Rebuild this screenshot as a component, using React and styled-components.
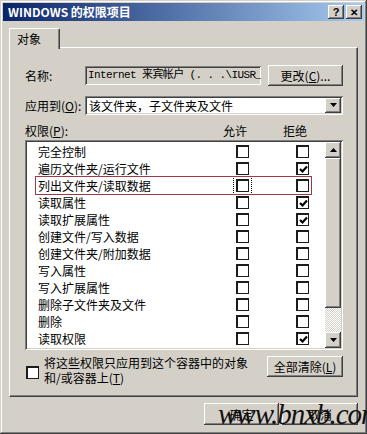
import React from 'react';
import styled, { createGlobalStyle } from 'styled-components';

const GlobalStyle = createGlobalStyle`
  html, body {
    margin: 0;
    padding: 0;
    background: #d4d0c8;
  }
  * {
    box-sizing: border-box;
  }
  body {
    font-family: "Noto Sans CJK SC", "Liberation Sans", sans-serif;
    font-size: 12px;
    color: #000;
  }
`;

const raised = `
  box-shadow: inset -1px -1px #404040, inset 1px 1px #ffffff,
    inset -2px -2px #808080, inset 2px 2px #d4d0c8;
`;
const sunken = `
  box-shadow: inset 1px 1px #808080, inset -1px -1px #ffffff,
    inset 2px 2px #404040, inset -2px -2px #d4d0c8;
`;

const perms = [
  { name: '完全控制', allow: false, deny: false },
  { name: '遍历文件夹/运行文件', allow: false, deny: true },
  { name: '列出文件夹/读取数据', allow: false, deny: false, marked: true },
  { name: '读取属性', allow: false, deny: true },
  { name: '读取扩展属性', allow: false, deny: true },
  { name: '创建文件/写入数据', allow: false, deny: false },
  { name: '创建文件夹/附加数据', allow: false, deny: false },
  { name: '写入属性', allow: false, deny: false },
  { name: '写入扩展属性', allow: false, deny: false },
  { name: '删除子文件夹及文件', allow: false, deny: false },
  { name: '删除', allow: false, deny: false },
  { name: '读取权限', allow: false, deny: true },
];

const CheckMark = () => (
  <svg width="9" height="9" viewBox="0 0 9 9">
    <polyline points="1,4 3.5,6.5 8,1.5" fill="none" stroke="#000" strokeWidth="2.2" />
  </svg>
);

const Arrow = ({ up }) => (
  <svg width="7" height="4" viewBox="0 0 7 4">
    <polygon points={up ? '3.5,0 7,4 0,4' : '0,0 7,0 3.5,4'} fill="#000" />
  </svg>
);

const Check = ({ checked, focused }) => (
  <CheckBox $focused={focused}>{checked && <CheckMark />}</CheckBox>
);

const App = () => {
  return (
    <>
      <GlobalStyle />
      <Window>
        <TitleBar>
          <TitleText>WINDOWS 的权限项目</TitleText>
          <TitleButton>?</TitleButton>
          <TitleButton $close>✕</TitleButton>
        </TitleBar>

        <TabStrip>
          <Tab>对象</Tab>
        </TabStrip>

        <Panel>
          <FieldRow>
            <Label>名称:</Label>
            <NameField>Internet 来宾帐户 (.  .  .\IUSR_</NameField>
            <Button $w={75}>
              更改(<u>C</u>)...
            </Button>
          </FieldRow>

          <ApplyRow>
            <Label>
              应用到(<u>O</u>):
            </Label>
            <Select>
              <SelectText>该文件夹，子文件夹及文件</SelectText>
              <SelectButton>
                <Arrow />
              </SelectButton>
            </Select>
          </ApplyRow>

          <HeaderRow>
            <HeaderLabel>
              权限(<u>P</u>):
            </HeaderLabel>
            <HeaderCol>允许</HeaderCol>
            <HeaderCol>拒绝</HeaderCol>
          </HeaderRow>

          <ListBox>
            <Rows>
              {perms.map((p, i) => (
                <PermRow key={p.name} $marked={p.marked}>
                  <PermName>{p.name}</PermName>
                  <Check checked={p.allow} focused={i === 2} />
                  <Check checked={p.deny} />
                </PermRow>
              ))}
            </Rows>
            <ScrollBar>
              <ScrollButton>
                <Arrow up />
              </ScrollButton>
              <Thumb />
              <Track />
              <ScrollButton>
                <Arrow />
              </ScrollButton>
            </ScrollBar>
          </ListBox>

          <BottomRow>
            <InheritBox>
              <Check />
              <InheritText>
                将这些权限只应用到这个容器中的对象
                <br />
                和/或容器上(<u>T</u>)
              </InheritText>
            </InheritBox>
            <Button $w={76}>
              全部清除(<u>L</u>)
            </Button>
          </BottomRow>
        </Panel>

        <Footer>
          <Button $w={75} $h={22}>确定</Button>
          <Button $w={76} $h={22}>取消</Button>
        </Footer>

        <Watermark>www.bnxb.com</Watermark>
      </Window>
    </>
  );
};

const Window = styled.div`
  position: relative;
  width: 367px;
  height: 434px;
  padding: 3px;
  background: #d4d0c8;
  box-shadow: inset -1px -1px #404040, inset 1px 1px #d4d0c8,
    inset -2px -2px #808080, inset 2px 2px #ffffff;
  overflow: hidden;
`;

const TitleBar = styled.div`
  display: flex;
  align-items: center;
  height: 18px;
  padding: 0 2px 0 5px;
  background: linear-gradient(to right, #0a246a, #a6caf0);
  color: #fff;
`;

const TitleText = styled.div`
  flex: 1;
  font-weight: 700;
  font-size: 12px;
  line-height: 18px;
`;

const TitleButton = styled.div`
  display: flex;
  align-items: center;
  justify-content: center;
  width: 16px;
  height: 14px;
  margin-left: ${(props) => (props.$close ? '2px' : '0')};
  background: #d4d0c8;
  color: #000;
  font-family: "Liberation Sans", sans-serif;
  font-weight: 700;
  font-size: ${(props) => (props.$close ? '10px' : '11px')};
  ${raised}
`;

const TabStrip = styled.div`
  display: flex;
  margin-top: 7px;
  padding-left: 6px;
  height: 19px;
`;

const Tab = styled.div`
  position: relative;
  z-index: 1;
  width: 51px;
  height: 21px;
  padding: 2px 0 0 7px;
  background: #d4d0c8;
  border-top: 1px solid #ffffff;
  border-left: 1px solid #ffffff;
  border-right: 1px solid #404040;
  box-shadow: inset -1px 0 #808080;
  border-top-right-radius: 2px;
  line-height: 16px;
`;

const Panel = styled.div`
  margin: 0 6px;
  height: 350px;
  padding: 17px 14px 0 15px;
  border-top: 1px solid #ffffff;
  border-left: 1px solid #ffffff;
  border-right: 1px solid #404040;
  border-bottom: 1px solid #404040;
  box-shadow: inset -1px -1px #808080;
`;

const FieldRow = styled.div`
  display: flex;
  align-items: center;
  height: 21px;
`;

const Label = styled.div`
  width: 60px;
  flex-shrink: 0;
  white-space: nowrap;
`;

const NameField = styled.div`
  width: 176px;
  height: 19px;
  padding: 0 3px;
  overflow: hidden;
  white-space: nowrap;
  font-family: "Liberation Mono", "Noto Sans CJK SC", monospace;
  font-size: 11px;
  letter-spacing: -0.6px;
  line-height: 19px;
  background: #d4d0c8;
  ${sunken}
`;

const Button = styled.div`
  display: flex;
  align-items: center;
  justify-content: center;
  width: ${(props) => props.$w}px;
  height: ${(props) => props.$h || 21}px;
  margin-left: auto;
  background: #d4d0c8;
  white-space: nowrap;
  ${raised}
`;

const ApplyRow = styled.div`
  display: flex;
  align-items: center;
  height: 18px;
  margin-top: 10px;
`;

const Select = styled.div`
  flex: 1;
  display: flex;
  align-items: center;
  height: 19px;
  padding: 2px;
  background: #ffffff;
  ${sunken}
`;

const SelectText = styled.div`
  flex: 1;
  padding-left: 2px;
  line-height: 15px;
  white-space: nowrap;
`;

const SelectButton = styled.div`
  display: flex;
  align-items: center;
  justify-content: center;
  width: 16px;
  height: 15px;
  background: #d4d0c8;
  ${raised}
`;

const HeaderRow = styled.div`
  display: flex;
  align-items: center;
  height: 17px;
  margin-top: 8px;
`;

const HeaderLabel = styled.div`
  width: 198px;
`;

const HeaderCol = styled.div`
  width: 60px;
`;

const ListBox = styled.div`
  display: flex;
  height: 210px;
  margin-top: 1px;
  padding: 2px;
  background: #ffffff;
  ${sunken}
`;

const Rows = styled.div`
  flex: 1;
  padding: 1px 0 0 9px;
`;

const PermRow = styled.div`
  display: flex;
  align-items: center;
  width: 275px;
  height: 17px;
  outline: ${(props) => (props.$marked ? '1px solid #a03848' : 'none')};
  outline-offset: 0;
`;

const PermName = styled.div`
  width: 200px;
  padding-left: 2px;
  white-space: nowrap;
  & + div {
    margin-right: 47px;
  }
`;

const CheckBox = styled.div`
  display: flex;
  align-items: center;
  justify-content: center;
  width: 13px;
  height: 13px;
  flex-shrink: 0;
  background: #ffffff;
  border: 2px solid #1c1c1c;
  border-right-width: 1.5px;
  border-bottom-width: 1.5px;
  outline: ${(props) => (props.$focused ? '1px dotted #000' : 'none')};
  outline-offset: 2px;
`;

const ScrollBar = styled.div`
  display: flex;
  flex-direction: column;
  width: 16px;
`;

const ScrollButton = styled.div`
  display: flex;
  align-items: center;
  justify-content: center;
  height: 16px;
  background: #d4d0c8;
  ${raised}
`;

const Thumb = styled.div`
  height: 150px;
  background: #d4d0c8;
  ${raised}
`;

const Track = styled.div`
  flex: 1;
  background: repeating-conic-gradient(#ffffff 0 25%, #d4d0c8 0 50%) 0 0 / 2px 2px;
`;

const BottomRow = styled.div`
  display: flex;
  align-items: flex-start;
  margin-top: 6px;
`;

const InheritBox = styled.div`
  display: flex;
  align-items: flex-start;
  padding-left: 1px;

  & > div:first-child {
    margin-top: 10px;
  }
`;

const InheritText = styled.div`
  margin-left: 5px;
  margin-top: -1px;
  line-height: 15px;
`;

const Footer = styled.div`
  display: flex;
  justify-content: flex-end;
  gap: 3px;
  margin-top: 6px;
  padding-right: 6px;

  & > div {
    margin-left: 0;
  }
`;

const Watermark = styled.div`
  position: absolute;
  left: 218px;
  top: 398px;
  font-family: "Liberation Serif", serif;
  font-style: italic;
  font-size: 29px;
  letter-spacing: -1px;
  color: #111;
  pointer-events: none;
`;

export default App;
